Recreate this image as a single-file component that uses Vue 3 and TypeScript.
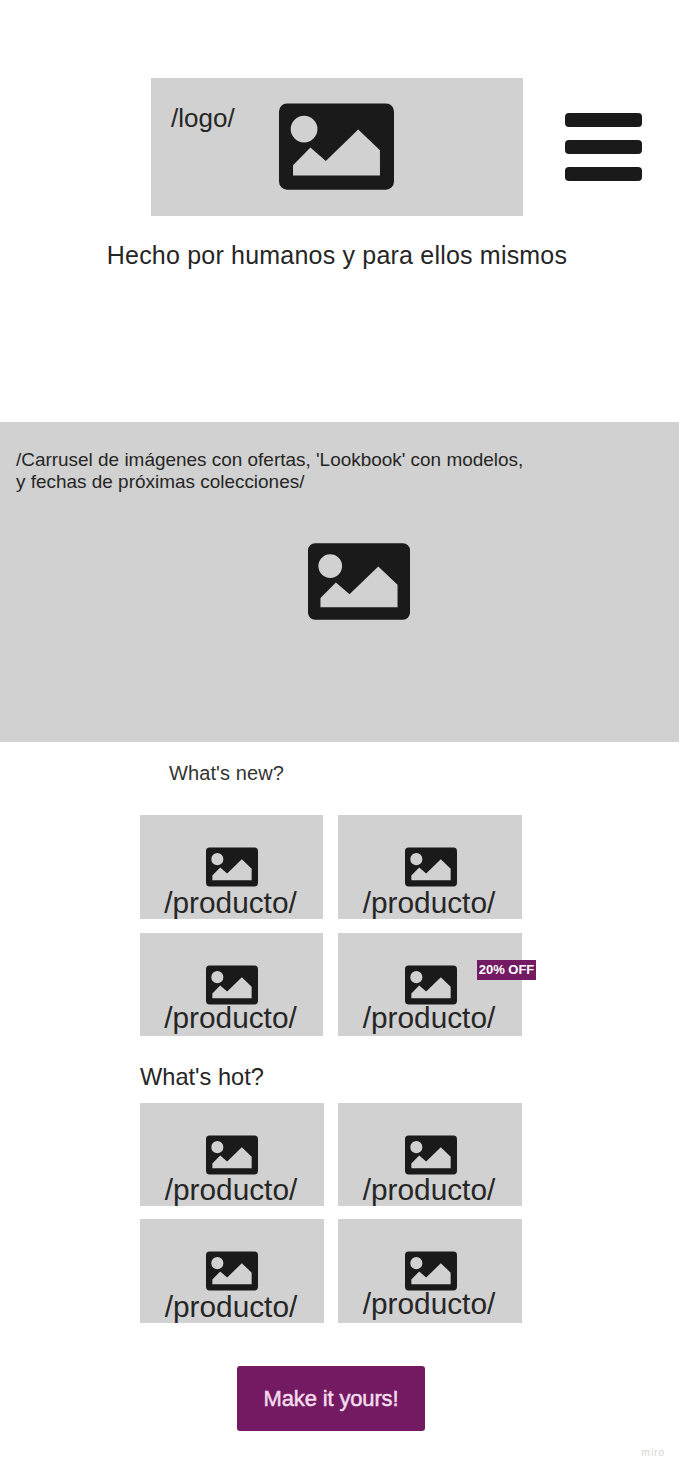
<template>
  <div class="page">
    <header class="top">
      <div class="logo">
        <span class="logo-text">/logo/</span>
        <svg class="icon logo-icon" viewBox="0 0 344 258"><path :d="imageIcon" fill-rule="evenodd" /></svg>
      </div>
      <div class="burger">
        <span></span>
        <span></span>
        <span></span>
      </div>
    </header>
    <p class="tagline">Hecho por humanos y para ellos mismos</p>

    <section class="hero">
      <p class="hero-text">
        /Carrusel de imágenes con ofertas, 'Lookbook' con modelos,<br />
        y fechas de próximas colecciones/
      </p>
      <svg class="icon hero-icon" viewBox="0 0 344 258"><path :d="imageIcon" fill-rule="evenodd" /></svg>
    </section>

    <h2 class="new-title">What's new?</h2>
    <div class="grid new-grid">
      <div v-for="card in newCards" :key="card.id" class="card">
        <svg class="icon card-icon" viewBox="0 0 344 258"><path :d="imageIcon" fill-rule="evenodd" /></svg>
        <span class="card-label">/producto/</span>
        <span v-if="card.badge" class="badge">{{ card.badge }}</span>
      </div>
    </div>

    <h2 class="hot-title">What's hot?</h2>
    <div class="grid hot-grid">
      <div v-for="card in hotCards" :key="card.id" class="card">
        <svg class="icon card-icon" viewBox="0 0 344 258"><path :d="imageIcon" fill-rule="evenodd" /></svg>
        <span class="card-label">/producto/</span>
      </div>
    </div>

    <div class="cta-row">
      <button class="cta">Make it yours!</button>
    </div>
    <div class="miro">miro</div>
  </div>
</template>

<script setup lang="ts">
interface Card {
  id: number
  badge?: string
}

const imageIcon =
  'M24 0H320A24 24 0 0 1 344 24V234A24 24 0 0 1 320 258H24A24 24 0 0 1 0 234V24A24 24 0 0 1 24 0Z' +
  'M75 37A40 40 0 1 0 75 117A40 40 0 1 0 75 37Z' +
  'M42 185L94 132L140 172L237 78L302 140V216H42Z'

const newCards: Card[] = [{ id: 1 }, { id: 2 }, { id: 3 }, { id: 4, badge: '20% OFF' }]
const hotCards: Card[] = [{ id: 1 }, { id: 2 }, { id: 3 }, { id: 4 }]
</script>

<style>
body {
  background: #fff;
}
</style>

<style scoped>
.page {
  width: 679px;
  height: 1471px;
  overflow: hidden;
  position: relative;
  font-family: 'Liberation Sans', Arial, sans-serif;
  color: #262626;
}

.top {
  display: flex;
  align-items: center;
  padding: 78px 0 0 151px;
}

.logo {
  width: 372px;
  height: 138px;
  background: #d1d1d1;
  display: flex;
  align-items: flex-start;
  padding: 25px 0 0 20px;
  box-sizing: border-box;
}

.logo-text {
  font-size: 26px;
  line-height: 30px;
}

.icon {
  display: block;
  fill: #1a1a1a;
}

.logo-icon {
  width: 115px;
  height: 87px;
  margin-left: 44px;
}

.burger {
  margin-left: 42px;
  display: flex;
  flex-direction: column;
  gap: 13.5px;
}

.burger span {
  display: block;
  width: 77px;
  height: 13.5px;
  border-radius: 4px;
  background: #1a1a1a;
}

.tagline {
  margin: 25px 0 0;
  width: 674px;
  text-align: center;
  font-size: 25px;
  line-height: 28px;
  letter-spacing: 0.2px;
}

.hero {
  margin-top: 153px;
  height: 320px;
  background: #d1d1d1;
  padding: 27px 0 0 16px;
  box-sizing: border-box;
}

.hero-text {
  margin: 0;
  font-size: 18.96px;
  line-height: 22px;
}

.hero-icon {
  width: 102px;
  height: 77px;
  margin: 50px 0 0 292px;
}

.new-title,
.hot-title {
  margin: 0;
  font-weight: 400;
}

.new-title {
  padding: 20px 0 0 169px;
  font-size: 20px;
  line-height: 23px;
  letter-spacing: 0.1px;
  color: #333;
}

.grid {
  display: grid;
  grid-template-columns: 184px 184px;
  column-gap: 14px;
  margin-left: 140px;
}

.new-grid {
  margin-top: 30px;
  grid-template-columns: 183px 184px;
  column-gap: 15px;
  grid-template-rows: 104px 103px;
  row-gap: 14px;
}

.hot-title {
  padding: 27px 0 0 140px;
  font-size: 23.6px;
  line-height: 28px;
}

.hot-grid {
  margin-top: 12px;
  grid-template-rows: 103px 104px;
  row-gap: 13px;
}

.card {
  position: relative;
  background: #d1d1d1;
  display: flex;
  flex-direction: column;
  align-items: center;
  padding-top: 32px;
  box-sizing: border-box;
}

.card-icon {
  flex: none;
  width: 52px;
  height: 40px;
  margin-left: 1px;
}

.hot-grid .card:nth-child(odd) .card-icon {
  margin-left: 0;
}

.card-label {
  flex: none;
  margin: -4px 2px 0 0;
  font-size: 29.8px;
  line-height: 35px;
}

.new-grid .card:nth-child(-n + 2) .card-label {
  margin-top: -2px;
}

.new-grid .card:nth-child(n + 3) .card-label {
  margin-top: -5px;
}

.hot-grid .card:nth-child(-n + 2) .card-label {
  margin-top: -3px;
}

.hot-grid .card:nth-child(3) .card-label {
  margin-top: -2px;
}

.hot-grid .card:nth-child(4) .card-label {
  margin-top: -5px;
}

.badge {
  position: absolute;
  left: 139px;
  top: 27px;
  width: 59px;
  height: 20px;
  background: #731a62;
  color: #fff;
  font-size: 13px;
  font-weight: 700;
  line-height: 19px;
  text-align: center;
  white-space: nowrap;
}

.cta-row {
  margin-top: 43px;
  padding-left: 237px;
}

.cta {
  display: block;
  width: 188px;
  height: 65px;
  border: none;
  border-radius: 3px;
  background: #731a62;
  color: #f3dcee;
  font-family: inherit;
  font-size: 22px;
  font-weight: 400;
  -webkit-text-stroke: 0.5px #f3dcee;
  letter-spacing: -0.15px;
}

.miro {
  margin: 16px 14px 0 0;
  text-align: right;
  font-size: 10px;
  line-height: 12px;
  letter-spacing: 1px;
  color: #d4d4d4;
}
</style>
